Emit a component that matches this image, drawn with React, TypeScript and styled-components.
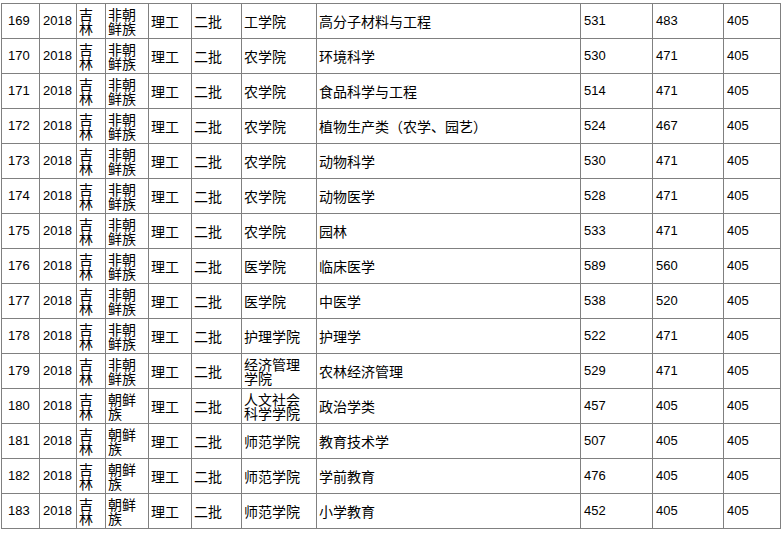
import React from "react";
import styled, { createGlobalStyle } from "styled-components";

const GlobalStyle = createGlobalStyle`
  html, body {
    margin: 0;
    padding: 0;
    background: #ffffff;
  }
`;

// Components
const Page = styled.div`
  padding: 3px 0 0 1px;
  background: #ffffff;
`;

const Table = styled.table`
  width: 779px;
  table-layout: fixed;
  border-collapse: collapse;
  border: 1px solid #808080;
  color: #000000;
  font-family: "Noto Sans CJK SC", "Liberation Sans", sans-serif;
`;

const Row = styled.tr`
  height: 35px;
`;

const Cell = styled.td<{ $num?: boolean; $first?: boolean }>`
  border: 1px solid #808080;
  padding: 0 2px 0 ${(p) => (p.$first ? "6px" : p.$num ? "3px" : "2px")};
  vertical-align: middle;
  white-space: pre-line;
  overflow: hidden;
  font-family: ${(p) =>
    p.$num
      ? '"Liberation Sans", Arial, sans-serif'
      : '"Noto Sans CJK SC", "Liberation Sans", sans-serif'};
  font-size: ${(p) => (p.$num ? "13px" : "14px")};
  line-height: 14px;
`;

const widths = [38, 37, 29, 43, 43, 50, 75, 264, 72, 71, 57];

interface Record {
  id: number;
  ethnic: string;
  college: string;
  major: string;
  high: number;
  low: number;
  line: number;
}

const records: Array<Record> = [
  { id: 169, ethnic: "非朝鲜族", college: "工学院", major: "高分子材料与工程", high: 531, low: 483, line: 405 },
  { id: 170, ethnic: "非朝鲜族", college: "农学院", major: "环境科学", high: 530, low: 471, line: 405 },
  { id: 171, ethnic: "非朝鲜族", college: "农学院", major: "食品科学与工程", high: 514, low: 471, line: 405 },
  { id: 172, ethnic: "非朝鲜族", college: "农学院", major: "植物生产类（农学、园艺）", high: 524, low: 467, line: 405 },
  { id: 173, ethnic: "非朝鲜族", college: "农学院", major: "动物科学", high: 530, low: 471, line: 405 },
  { id: 174, ethnic: "非朝鲜族", college: "农学院", major: "动物医学", high: 528, low: 471, line: 405 },
  { id: 175, ethnic: "非朝鲜族", college: "农学院", major: "园林", high: 533, low: 471, line: 405 },
  { id: 176, ethnic: "非朝鲜族", college: "医学院", major: "临床医学", high: 589, low: 560, line: 405 },
  { id: 177, ethnic: "非朝鲜族", college: "医学院", major: "中医学", high: 538, low: 520, line: 405 },
  { id: 178, ethnic: "非朝鲜族", college: "护理学院", major: "护理学", high: 522, low: 471, line: 405 },
  { id: 179, ethnic: "非朝鲜族", college: "经济管理\n学院", major: "农林经济管理", high: 529, low: 471, line: 405 },
  { id: 180, ethnic: "朝鲜\n族", college: "人文社会\n科学学院", major: "政治学类", high: 457, low: 405, line: 405 },
  { id: 181, ethnic: "朝鲜\n族", college: "师范学院", major: "教育技术学", high: 507, low: 405, line: 405 },
  { id: 182, ethnic: "朝鲜\n族", college: "师范学院", major: "学前教育", high: 476, low: 405, line: 405 },
  { id: 183, ethnic: "朝鲜\n族", college: "师范学院", major: "小学教育", high: 452, low: 405, line: 405 },
];

export default function App() {
  return (
    <Page>
      <GlobalStyle />
      <Table>
        <colgroup>
          {widths.map((w, i) => (
            <col key={i} style={{ width: w }} />
          ))}
        </colgroup>
        <tbody>
          {records.map((r) => (
            <Row key={r.id}>
              <Cell $num $first>{r.id}</Cell>
              <Cell $num>2018</Cell>
              <Cell>{"吉\n林"}</Cell>
              <Cell>{r.ethnic === "非朝鲜族" ? "非朝\n鲜族" : r.ethnic}</Cell>
              <Cell>理工</Cell>
              <Cell>二批</Cell>
              <Cell>{r.college}</Cell>
              <Cell>{r.major}</Cell>
              <Cell $num>{r.high}</Cell>
              <Cell $num>{r.low}</Cell>
              <Cell $num>{r.line}</Cell>
            </Row>
          ))}
        </tbody>
      </Table>
    </Page>
  );
}
